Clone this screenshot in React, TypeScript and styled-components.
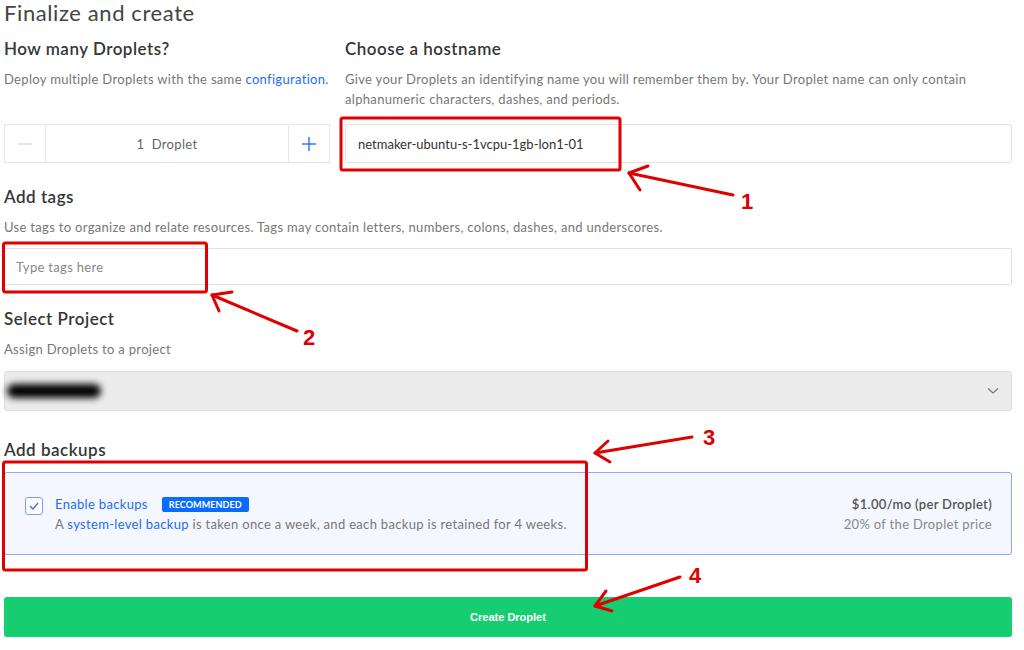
import React from "react";
import styled, { createGlobalStyle } from "styled-components";

const Global = createGlobalStyle`
  html, body { margin: 0; padding: 0; background: #fff; }
  body { font-family: Lato, "Open Sans", sans-serif; color: #333; letter-spacing: 0.32px; }
  * { box-sizing: border-box; }
`;

const Page = styled.div`
  position: relative;
  width: 1024px;
  height: 650px;
  padding: 0 12px 0 4px;
  overflow: hidden;
`;

const Title = styled.h1`
  margin: 0;
  font-size: 22px;
  line-height: 25px;
  font-weight: 400;
  letter-spacing: 0.6px;
  color: #444;
`;

const Columns = styled.div`
  display: grid;
  grid-template-columns: 326px 1fr;
  column-gap: 15px;
`;

const Section = styled.section<{ $top: number }>`
  display: flex;
  flex-direction: column;
  margin-top: ${(p) => p.$top}px;
`;

const Heading = styled.h2`
  margin: 0;
  font-size: 17px;
  line-height: 20px;
  font-weight: 600;
  letter-spacing: 0.5px;
  color: #363636;
`;

const Desc = styled.p<{ $gap: number; $minH?: number }>`
  margin: 10px 0 ${(p) => p.$gap}px;
  font-size: 13px;
  line-height: 20px;
  color: #777;
  min-height: ${(p) => p.$minH ?? 20}px;
`;

const Link = styled.a`
  color: #1f6bf5;
  text-decoration: none;
`;

const Stepper = styled.div`
  display: grid;
  grid-template-columns: 41px 1fr 41px;
  height: 39px;
  border: 1px solid #e6e6e6;
`;

const StepBtn = styled.div`
  display: flex;
  align-items: center;
  justify-content: center;
  &:first-child { border-right: 1px solid #e6e6e6; }
  &:last-child { border-left: 1px solid #e6e6e6; }
`;

const StepValue = styled.div`
  display: flex;
  align-items: center;
  justify-content: center;
  font-size: 13px;
  color: #666;
`;

const TextInput = styled.div<{ $h: number; $placeholder?: boolean }>`
  display: flex;
  align-items: center;
  height: ${(p) => p.$h}px;
  padding: 0 ${(p) => (p.$placeholder ? 11 : 12)}px;
  border: 1px solid #e2e2e2;
  border-radius: 2px;
  font-size: 13px;
  letter-spacing: ${(p) => (p.$placeholder ? "0.32px" : "0")};
  color: ${(p) => (p.$placeholder ? "#888" : "#333")};
`;

const Select = styled.div`
  display: flex;
  align-items: center;
  justify-content: space-between;
  height: 40px;
  padding: 0 12px 0 2px;
  background: #ececec;
  border: 1px solid #dedede;
  border-radius: 3px;
`;

const Blurred = styled.span`
  display: block;
  width: 94px;
  height: 14px;
  background: #000;
  border-radius: 7px;
  filter: blur(3.5px);
`;

const BackupBox = styled.div`
  display: flex;
  justify-content: space-between;
  align-items: flex-start;
  margin-top: 12px;
  padding: 21px 19px 20px 20px;
  background: #f4f7fe;
  border: 1px solid #8ea9f7;
  border-radius: 3px;
`;

const BackupLeft = styled.div`
  display: flex;
  gap: 12px;
`;

const Checkbox = styled.div`
  width: 18px;
  height: 18px;
  margin-top: 3px;
  border: 1px solid #7e9cf3;
  border-radius: 3px;
  background: #fff;
  display: flex;
  align-items: center;
  justify-content: center;
`;

const TitleRow = styled.div`
  display: flex;
  align-items: center;
  gap: 14px;
  height: 20px;
`;

const BackupTitle = styled.span`
  font-size: 13px;
  color: #1f6bf5;
`;

const Badge = styled.span`
  display: inline-flex;
  align-items: center;
  height: 15px;
  padding: 0 7px;
  background: #0a6cff;
  border-radius: 2px;
  color: #fff;
  font-size: 9px;
  font-weight: 700;
  letter-spacing: 0.1px;
`;

const BackupText = styled.div`
  font-size: 13px;
  line-height: 20px;
  color: #777;
`;

const PriceCol = styled.div`
  text-align: right;
  font-size: 13px;
  line-height: 20px;
`;

const Price = styled.div`
  color: #555;
  font-weight: 600;
`;

const PriceNote = styled.div`
  color: #888;
`;

const CreateButton = styled.button`
  display: block;
  width: 100%;
  height: 40px;
  margin-top: 42px;
  border: none;
  border-radius: 3px;
  background: #17cd72;
  color: #fff;
  font-family: "Liberation Sans", Arial, sans-serif;
  font-size: 11px;
  font-weight: 700;
  letter-spacing: 0;
`;

const Overlay = styled.svg`
  position: absolute;
  left: 0;
  top: 0;
  pointer-events: none;
`;

const RED = "#e00000";

function Annotations() {
  const line = { stroke: RED, strokeWidth: 3, fill: "none", strokeLinecap: "round" as const, strokeLinejoin: "round" as const };
  const num = { fill: "#dc0000", fontFamily: "'Liberation Sans', Arial, sans-serif", fontWeight: 700, fontSize: 22 };
  return (
    <Overlay width="1024" height="650" viewBox="0 0 1024 650">
      <rect x="341" y="118" width="279" height="52" rx="2" {...line} />
      <rect x="3.5" y="243" width="203" height="49" rx="2" {...line} />
      <rect x="3.5" y="462" width="583" height="108" rx="2" {...line} />

      <polyline points="733,195 629,173" {...line} />
      <polyline points="648,166 629,173 640,190" {...line} />
      <text x="741" y="209" {...num}>1</text>

      <polyline points="297,331 212,295" {...line} />
      <polyline points="232,292 212,295 219,311" {...line} />
      <text x="303" y="345" {...num}>2</text>

      <polyline points="692,437 595,453" {...line} />
      <polyline points="608,441 595,453 610,462" {...line} />
      <text x="703" y="445" {...num}>3</text>

      <polyline points="680,577 595,606" {...line} />
      <polyline points="606,591 595,606 612,611" {...line} />
      <text x="689" y="583" {...num}>4</text>
    </Overlay>
  );
}

export default function App() {
  return (
    <>
      <Global />
      <Page>
        <Title>Finalize and create</Title>
        <Columns>
          <Section $top={14}>
            <Heading>How many Droplets?</Heading>
            <Desc $gap={15} $minH={40}>
              Deploy multiple Droplets with the same <Link>configuration</Link>.
            </Desc>
            <Stepper>
              <StepBtn>
                <svg width="14" height="2" viewBox="0 0 14 2">
                  <line x1="0" y1="1" x2="14" y2="1" stroke="#d6d6d6" strokeWidth="1.2" />
                </svg>
              </StepBtn>
              <StepValue>1&nbsp; Droplet</StepValue>
              <StepBtn>
                <svg width="14" height="14" viewBox="0 0 14 14">
                  <line x1="0" y1="7" x2="14" y2="7" stroke="#2c6ef6" strokeWidth="1.4" />
                  <line x1="7" y1="0" x2="7" y2="14" stroke="#2c6ef6" strokeWidth="1.4" />
                </svg>
              </StepBtn>
            </Stepper>
          </Section>
          <Section $top={14}>
            <Heading>Choose a hostname</Heading>
            <Desc $gap={15} $minH={40}>
              Give your Droplets an identifying name you will remember them by. Your Droplet name can only contain
              alphanumeric characters, dashes, and periods.
            </Desc>
            <TextInput $h={39}>netmaker-ubuntu-s-1vcpu-1gb-lon1-01</TextInput>
          </Section>
        </Columns>

        <Section $top={24}>
          <Heading>Add tags</Heading>
          <Desc $gap={11}>
            Use tags to organize and relate resources. Tags may contain letters, numbers, colons, dashes, and underscores.
          </Desc>
          <TextInput $h={37} $placeholder>Type tags here</TextInput>
        </Section>

        <Section $top={24}>
          <Heading>Select Project</Heading>
          <Desc $gap={12}>Assign Droplets to a project</Desc>
          <Select>
            <Blurred />
            <svg width="12" height="8" viewBox="0 0 12 8">
              <polyline points="1,1.5 6,6 11,1.5" fill="none" stroke="#777" strokeWidth="1.2" />
            </svg>
          </Select>
        </Section>

        <Section $top={29}>
          <Heading>Add backups</Heading>
          <BackupBox>
            <BackupLeft>
              <Checkbox>
                <svg width="10" height="8" viewBox="0 0 10 8">
                  <polyline points="1,4 4,7 9,1" fill="none" stroke="#2c6ef6" strokeWidth="1.2" />
                </svg>
              </Checkbox>
              <div>
                <TitleRow>
                  <BackupTitle>Enable backups</BackupTitle>
                  <Badge>RECOMMENDED</Badge>
                </TitleRow>
                <BackupText>
                  A <Link>system-level backup</Link> is taken once a week, and each backup is retained for 4 weeks.
                </BackupText>
              </div>
            </BackupLeft>
            <PriceCol>
              <Price>$1.00/mo (per Droplet)</Price>
              <PriceNote>20% of the Droplet price</PriceNote>
            </PriceCol>
          </BackupBox>
        </Section>

        <CreateButton>Create Droplet</CreateButton>
        <Annotations />
      </Page>
    </>
  );
}
